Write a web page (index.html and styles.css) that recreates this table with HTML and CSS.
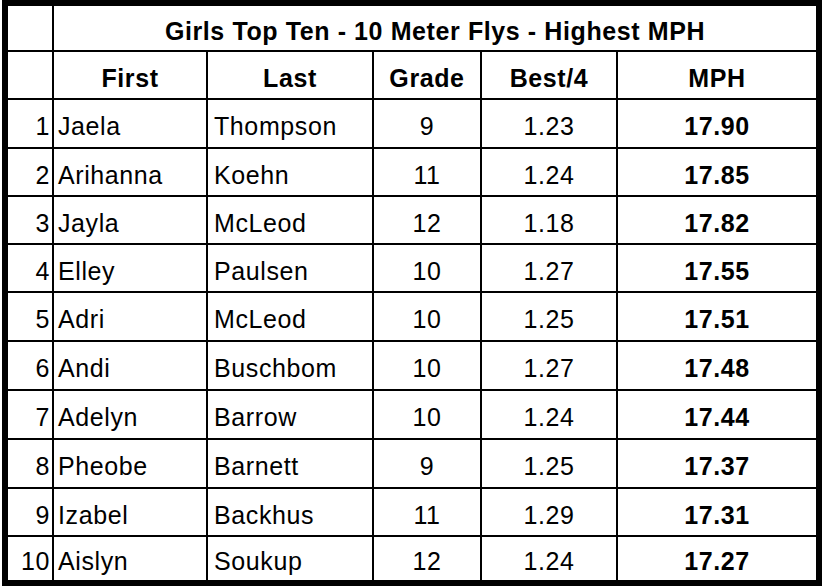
FILE: index.html
```html
<!DOCTYPE html>
<html>
<head>
<meta charset="utf-8">
<link rel="stylesheet" href="styles.css">
</head>
<body>
<div class="sheet">
  <div class="cell"></div>
  <div class="cell title">Girls Top Ten - 10 Meter Flys - Highest MPH</div>

  <div class="cell"></div>
  <div class="cell hd">First</div>
  <div class="cell hd">Last</div>
  <div class="cell hd">Grade</div>
  <div class="cell hd">Best/4</div>
  <div class="cell hd">MPH</div>

  <div class="cell num">1</div><div class="cell first">Jaela</div><div class="cell last">Thompson</div><div class="cell ctr">9</div><div class="cell ctr">1.23</div><div class="cell mph">17.90</div>
  <div class="cell num">2</div><div class="cell first">Arihanna</div><div class="cell last">Koehn</div><div class="cell ctr">11</div><div class="cell ctr">1.24</div><div class="cell mph">17.85</div>
  <div class="cell num">3</div><div class="cell first">Jayla</div><div class="cell last">McLeod</div><div class="cell ctr">12</div><div class="cell ctr">1.18</div><div class="cell mph">17.82</div>
  <div class="cell num">4</div><div class="cell first">Elley</div><div class="cell last">Paulsen</div><div class="cell ctr">10</div><div class="cell ctr">1.27</div><div class="cell mph">17.55</div>
  <div class="cell num">5</div><div class="cell first">Adri</div><div class="cell last">McLeod</div><div class="cell ctr">10</div><div class="cell ctr">1.25</div><div class="cell mph">17.51</div>
  <div class="cell num">6</div><div class="cell first">Andi</div><div class="cell last">Buschbom</div><div class="cell ctr">10</div><div class="cell ctr">1.27</div><div class="cell mph">17.48</div>
  <div class="cell num">7</div><div class="cell first">Adelyn</div><div class="cell last">Barrow</div><div class="cell ctr">10</div><div class="cell ctr">1.24</div><div class="cell mph">17.44</div>
  <div class="cell num">8</div><div class="cell first">Pheobe</div><div class="cell last">Barnett</div><div class="cell ctr">9</div><div class="cell ctr">1.25</div><div class="cell mph">17.37</div>
  <div class="cell num">9</div><div class="cell first">Izabel</div><div class="cell last">Backhus</div><div class="cell ctr">11</div><div class="cell ctr">1.29</div><div class="cell mph">17.31</div>
  <div class="cell num">10</div><div class="cell first">Aislyn</div><div class="cell last">Soukup</div><div class="cell ctr">12</div><div class="cell ctr">1.24</div><div class="cell mph">17.27</div>
</div>
</body>
</html>
```

FILE: styles.css
```css
html, body {
  margin: 0;
  padding: 0;
  background: #ffffff;
}

body {
  font-family: "Liberation Sans", Arial, Helvetica, sans-serif;
  font-size: 25px;
  color: #000;
}

.sheet {
  display: grid;
  grid-template-columns: 44px 152px 164px 106px 134px 198px;
  grid-template-rows: 44px 46px 47px 46px 46px 46px 47px 47px 47px 47px 46px 43px;
  gap: 2px;
  width: fit-content;
  margin-left: 2px;
  background: #000;
  border: 6px solid #000;
}

.cell {
  background: #fff;
  display: flex;
  align-items: center;
  padding-top: 6px;
  box-sizing: border-box;
  letter-spacing: 0.6px;
  white-space: nowrap;
  overflow: hidden;
}

.title {
  grid-column: 2 / 7;
  justify-content: center;
  font-weight: bold;
}

.hd {
  justify-content: center;
  font-weight: bold;
}

.num {
  justify-content: flex-end;
  padding-right: 2px;
}

.first {
  padding-left: 4px;
}

.last {
  padding-left: 6px;
}

.ctr {
  justify-content: center;
}

.mph {
  justify-content: center;
  font-weight: bold;
}
```
